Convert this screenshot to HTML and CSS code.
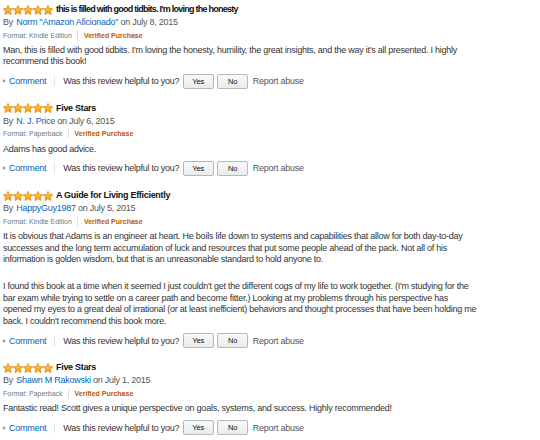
FILE: index.html
```html
<!DOCTYPE html>
<html>
<head>
<meta charset="utf-8">
<link rel="stylesheet" href="styles.css">
</head>
<body>
<svg width="0" height="0" class="defs">
  <defs>
    <linearGradient id="starfill" x1="0" y1="0" x2="0" y2="1">
      <stop offset="0" stop-color="#ffd24a"/>
      <stop offset="1" stop-color="#f29a0c"/>
    </linearGradient>
    <symbol id="star" viewBox="0 0 10 10">
      <polygon points="5,0.4 6.41,3.46 9.8,3.85 7.28,6.14 8.0,9.5 5,7.8 2.0,9.5 2.72,6.14 0.2,3.85 3.59,3.46" fill="url(#starfill)" stroke="#d9820f" stroke-width="0.7" stroke-linejoin="round"/>
    </symbol>
  </defs>
</svg>
<div class="reviews">
  <div class="review">
    <div class="title-row">
      <svg class="stars" viewBox="0 0 50 10"><use href="#star" x="0" width="10" height="10"/><use href="#star" x="10" width="10" height="10"/><use href="#star" x="20" width="10" height="10"/><use href="#star" x="30" width="10" height="10"/><use href="#star" x="40" width="10" height="10"/></svg>
      <span class="title title-tight">this is filled with good tidbits. I'm loving the honesty</span>
    </div>
    <div class="byline">By <a class="author">Norm "Amazon Aficionado"</a> on July 8, 2015</div>
    <div class="meta"><span>Format: Kindle Edition</span><span class="sep"></span><span class="verified">Verified Purchase</span></div>
    <div class="text">
      <p>Man, this is filled with good tidbits. I'm loving the honesty, humility, the great insights, and the way it's all presented. I highly<br>recommend this book!</p>
    </div>
    <div class="actions"><span class="tri"></span><a class="comment">Comment</a><span class="vsep"></span><span class="helpful">Was this review helpful to you?</span><button class="btn">Yes</button><button class="btn">No</button><a class="report">Report abuse</a></div>
  </div>

  <div class="review">
    <div class="title-row">
      <svg class="stars" viewBox="0 0 50 10"><use href="#star" x="0" width="10" height="10"/><use href="#star" x="10" width="10" height="10"/><use href="#star" x="20" width="10" height="10"/><use href="#star" x="30" width="10" height="10"/><use href="#star" x="40" width="10" height="10"/></svg>
      <span class="title">Five Stars</span>
    </div>
    <div class="byline">By <a class="author">N. J. Price</a> on July 6, 2015</div>
    <div class="meta"><span>Format: Paperback</span><span class="sep"></span><span class="verified">Verified Purchase</span></div>
    <div class="text">
      <p>Adams has good advice.</p>
    </div>
    <div class="actions"><span class="tri"></span><a class="comment">Comment</a><span class="vsep"></span><span class="helpful">Was this review helpful to you?</span><button class="btn">Yes</button><button class="btn">No</button><a class="report">Report abuse</a></div>
  </div>

  <div class="review">
    <div class="title-row">
      <svg class="stars" viewBox="0 0 50 10"><use href="#star" x="0" width="10" height="10"/><use href="#star" x="10" width="10" height="10"/><use href="#star" x="20" width="10" height="10"/><use href="#star" x="30" width="10" height="10"/><use href="#star" x="40" width="10" height="10"/></svg>
      <span class="title">A Guide for Living Efficiently</span>
    </div>
    <div class="byline">By <a class="author">HappyGuy1987</a> on July 5, 2015</div>
    <div class="meta"><span>Format: Kindle Edition</span><span class="sep"></span><span class="verified">Verified Purchase</span></div>
    <div class="text">
      <p>It is obvious that Adams is an engineer at heart. He boils life down to systems and capabilities that allow for both day-to-day<br>successes and the long term accumulation of luck and resources that put some people ahead of the pack. Not all of his<br>information is golden wisdom, but that is an unreasonable standard to hold anyone to.</p>
      <p>I found this book at a time when it seemed I just couldn't get the different cogs of my life to work together. (I'm studying for the<br>bar exam while trying to settle on a career path and become fitter.) Looking at my problems through his perspective has<br>opened my eyes to a great deal of irrational (or at least inefficient) behaviors and thought processes that have been holding me<br>back. I couldn't recommend this book more.</p>
    </div>
    <div class="actions"><span class="tri"></span><a class="comment">Comment</a><span class="vsep"></span><span class="helpful">Was this review helpful to you?</span><button class="btn">Yes</button><button class="btn">No</button><a class="report">Report abuse</a></div>
  </div>

  <div class="review">
    <div class="title-row">
      <svg class="stars" viewBox="0 0 50 10"><use href="#star" x="0" width="10" height="10"/><use href="#star" x="10" width="10" height="10"/><use href="#star" x="20" width="10" height="10"/><use href="#star" x="30" width="10" height="10"/><use href="#star" x="40" width="10" height="10"/></svg>
      <span class="title">Five Stars</span>
    </div>
    <div class="byline">By <a class="author">Shawn M Rakowski</a> on July 1, 2015</div>
    <div class="meta"><span>Format: Paperback</span><span class="sep"></span><span class="verified">Verified Purchase</span></div>
    <div class="text">
      <p>Fantastic read! Scott gives a unique perspective on goals, systems, and success. Highly recommended!</p>
    </div>
    <div class="actions"><span class="tri"></span><a class="comment">Comment</a><span class="vsep"></span><span class="helpful">Was this review helpful to you?</span><button class="btn">Yes</button><button class="btn">No</button><a class="report">Report abuse</a></div>
  </div>
</div>
</body>
</html>
```

FILE: styles.css
```css
html, body {
  margin: 0;
  background: #ffffff;
}

body {
  font-family: "Liberation Sans", Arial, sans-serif;
  font-size: 9px;
  letter-spacing: -0.25px;
  color: #333333;
}

.defs {
  position: absolute;
  width: 0;
  height: 0;
}

.reviews {
  padding: 3px 0 0 3px;
  width: 530px;
}

.review + .review {
  margin-top: 13.3px;
}

.title-row {
  display: flex;
  align-items: center;
  height: 13px;
}

.stars {
  display: block;
  width: 50px;
  height: 10px;
  margin-right: 3px;
}

.title {
  font-weight: bold;
  color: #111111;
  line-height: 13px;
  letter-spacing: -0.3px;
}

.title-tight {
  letter-spacing: -0.75px;
}

.byline {
  line-height: 13px;
  color: #555555;
}

.author {
  color: #0066c0;
  text-decoration: none;
  margin-left: 1px;
}

.meta {
  display: flex;
  align-items: center;
  height: 12px;
  font-size: 7px;
  letter-spacing: 0;
  color: #767676;
}

.sep {
  width: 1px;
  height: 9px;
  background: #dddddd;
  margin: 0 5.5px;
}

.verified {
  color: #c45500;
  font-weight: bold;
}

.text {
  margin-top: 3.7px;
  line-height: 11.67px;
}

.text p {
  margin: 0;
  white-space: nowrap;
}

.text p + p {
  margin-top: 15px;
}

.actions {
  display: flex;
  align-items: center;
  height: 15px;
  margin-top: 5.6px;
}

.tri {
  width: 0;
  height: 0;
  border-left: 3px solid #999999;
  border-top: 2.5px solid transparent;
  border-bottom: 2.5px solid transparent;
  margin-right: 3px;
}

.comment {
  color: #0066c0;
}

.vsep {
  width: 1px;
  height: 10px;
  background: #e3e3e3;
  margin: 0 8px;
}

.helpful {
  color: #333333;
}

.btn {
  box-sizing: border-box;
  width: 31px;
  height: 15px;
  margin: 0 0 0 3.5px;
  padding: 0;
  font-family: "Liberation Sans", Arial, sans-serif;
  font-size: 7.5px;
  letter-spacing: 0;
  color: #111111;
  border: 1px solid #b4b8be;
  border-radius: 2px;
  background: linear-gradient(#f8f9fa, #e9ebee);
}

.report {
  margin-left: 4.5px;
  color: #555555;
}
```
